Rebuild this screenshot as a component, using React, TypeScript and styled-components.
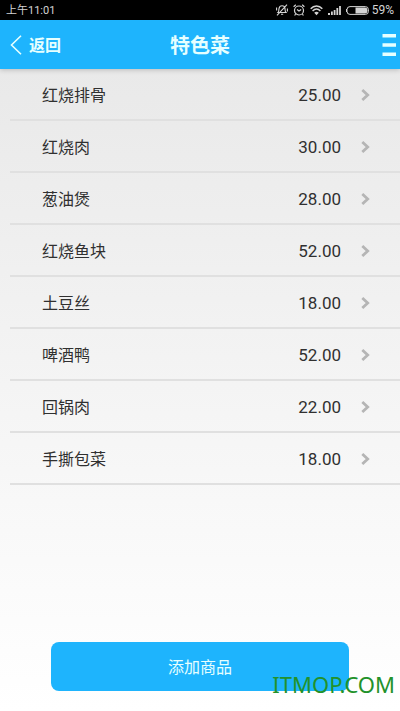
import React from "react";
import styled, { createGlobalStyle } from "styled-components";

const GlobalStyle = createGlobalStyle`
  *, *::before, *::after { box-sizing: border-box; }
  body {
    margin: 0;
    font-family: Roboto, "Noto Sans CJK SC", sans-serif;
    color: #333;
    background: #fff;
  }
  button { font: inherit; border: 0; margin: 0; cursor: pointer; }
`;

const Screen = styled.div`
  min-height: 100vh;
  display: flex;
  flex-direction: column;
  background: linear-gradient(#e9e9e9 69px, #f8f8f8 500px, #ffffff 100%);
`;

const StatusBar = styled.div`
  height: 20px;
  padding: 0 6px;
  display: flex;
  align-items: center;
  justify-content: space-between;
  background: #000;
  color: #d4d4d4;
  font-size: 12px;
  line-height: 20px;
`;

const Clock = styled.span`
  padding-top: 2px;
  font-size: 11px;
`;

const StatusIcons = styled.div`
  display: flex;
  align-items: center;
  gap: 5px;
`;

const Battery = styled.span`
  display: flex;
  align-items: center;
  gap: 3px;
`;

const Header = styled.header`
  height: 49px;
  display: grid;
  grid-template-columns: 1fr auto 1fr;
  align-items: center;
  background: #1eb4fd;
  color: #e6ffff;
  box-shadow: 0 1px 5px rgba(0, 0, 0, 0.2);
`;

const BackButton = styled.button`
  && { font-size: 16px; font-weight: 700; }
  justify-self: start;
  display: flex;
  align-items: center;
  gap: 7px;
  height: 48px;
  padding: 0 10px;
  background: none;
  color: inherit;
`;

const BackLabel = styled.span`
  padding-bottom: 2px;
`;

const Title = styled.h1`
  margin: 0;
  padding-top: 2px;
  font-size: 20px;
  line-height: 24px;
  font-weight: 700;
`;

const MenuButton = styled.button`
  justify-self: end;
  display: flex;
  padding: 8px 4px;
  background: none;
  color: inherit;
`;

const DishList = styled.ul`
  margin: 0;
  padding: 0 0 0 10px;
  list-style: none;
`;

const DishItem = styled.li`
  border-bottom: 2px solid #e0e0e0;
`;

const DishButton = styled.button`
  && { font-size: 16px; }
  width: 100%;
  height: 50px;
  padding: 2px 30px 0 32px;
  display: flex;
  align-items: center;
  background: none;
  color: #303030;
  text-align: left;
`;

const DishName = styled.span`
  flex: 1;
  padding-bottom: 2px;
`;

const Price = styled.span`
  margin-right: 20px;
  font-size: 17px;
`;

const Footer = styled.footer`
  margin-top: auto;
  padding: 0 51px 20px;
  position: relative;
`;

const AddButton = styled.button`
  && { font-size: 16px; }
  width: 100%;
  height: 49px;
  padding: 0 0 2px;
  border-radius: 8px;
  background: #1eb4fd;
  color: #e6ffff;
`;

const Watermark = styled.span`
  position: absolute;
  right: 5px;
  bottom: 15px;
  font-family: "Noto Sans", sans-serif;
  font-size: 22px;
  line-height: 24px;
  color: #22922a;
  pointer-events: none;
`;

const dishes = [
  { name: "红烧排骨", price: "25.00" },
  { name: "红烧肉", price: "30.00" },
  { name: "葱油煲", price: "28.00" },
  { name: "红烧鱼块", price: "52.00" },
  { name: "土豆丝", price: "18.00" },
  { name: "啤酒鸭", price: "52.00" },
  { name: "回锅肉", price: "22.00" },
  { name: "手撕包菜", price: "18.00" },
];

const MutedIcon = () => (
  <svg width="12" height="12" viewBox="0 0 12 12" fill="none" stroke="currentColor" strokeWidth="1.1" aria-hidden="true">
    <path d="M2 8.5C3 7.5 2.7 6 3 4.6C3.4 2.6 4.5 1.8 6 1.8s2.8 1 3 2.8c.2 1.7 0 2.9 1 3.9H2zM5 10.3h2.2M11 .7L1 11.3M.6 3.5v3M11.4 4.5v3" />
  </svg>
);

const AlarmIcon = () => (
  <svg width="12" height="12" viewBox="0 0 12 12" fill="none" stroke="currentColor" strokeWidth="1.2" aria-hidden="true">
    <circle cx="6" cy="6.5" r="4.5" />
    <path d="M.6 2.8L2.8.8M11.4 2.8L9.2.8M4 5.5l2 1.5l2.2-1.5M2.6 10.2l-1 1.3M9.4 10.2l1 1.3" />
  </svg>
);

const WifiIcon = () => (
  <svg width="13" height="11" viewBox="0 0 13 11" fill="none" stroke="currentColor" strokeWidth="1.5" aria-hidden="true">
    <path d="M.7 3.8C4-.1 9-.1 12.3 3.8M2.6 6C5 3.4 8 3.4 10.4 6" />
    <path d="M4.2 7.7C5.7 6.3 7.3 6.3 8.8 7.7L6.5 10.3z" fill="currentColor" stroke="none" />
  </svg>
);

const SignalIcon = () => (
  <svg width="13" height="10" viewBox="0 0 13 10" fill="currentColor" aria-hidden="true">
    <path d="M0 8h2v2H0zM3 6.5h1.8V10H3zM5.7 5h1.8v5H5.7zM8.4 3h1.8v7H8.4zM11.1 1h1.8v9h-1.8z" />
  </svg>
);

const BatteryIcon = () => (
  <svg width="23" height="9" viewBox="0 0 23 9" aria-hidden="true">
    <rect x="1" y=".6" width="21.4" height="7.8" rx="3" fill="none" stroke="currentColor" />
    <path d="M9.5 1.5H19q2.5 0 2.5 3T19 7.5H9.5zM0 3h1v3H0z" fill="currentColor" />
  </svg>
);

const BackIcon = () => (
  <svg width="12" height="20" viewBox="0 0 12 20" fill="none" stroke="currentColor" strokeWidth="1.6" aria-hidden="true">
    <path d="M11 .7L1.5 10L11 19.3" />
  </svg>
);

const MenuIcon = () => (
  <svg width="14" height="22" viewBox="0 0 14 22" fill="currentColor" aria-hidden="true">
    <path d="M.5 0H14v3.4H.5zM.5 9.3H14v3.4H.5zM.5 18.6H14V22H.5z" />
  </svg>
);

const ChevronIcon = () => (
  <svg width="9" height="12" viewBox="0 0 9 12" fill="none" stroke="#b5b5b5" strokeWidth="2.8" aria-hidden="true">
    <path d="M1.3 1L6.7 6L1.3 11" />
  </svg>
);

export default function App() {
  return (
    <Screen>
      <GlobalStyle />
      <StatusBar>
        <Clock>上午11:01</Clock>
        <StatusIcons>
          <MutedIcon />
          <AlarmIcon />
          <WifiIcon />
          <SignalIcon />
          <Battery>
            <BatteryIcon />
            <span>59%</span>
          </Battery>
        </StatusIcons>
      </StatusBar>
      <Header>
        <BackButton type="button">
          <BackIcon />
          <BackLabel>返回</BackLabel>
        </BackButton>
        <Title>特色菜</Title>
        <MenuButton type="button" aria-label="菜单">
          <MenuIcon />
        </MenuButton>
      </Header>
      <main>
        <DishList>
          {dishes.map((dish) => (
            <DishItem key={dish.name}>
              <DishButton type="button">
                <DishName>{dish.name}</DishName>
                <Price>{dish.price}</Price>
                <ChevronIcon />
              </DishButton>
            </DishItem>
          ))}
        </DishList>
      </main>
      <Footer>
        <AddButton type="button">添加商品</AddButton>
        <Watermark>ITMOP.COM</Watermark>
      </Footer>
    </Screen>
  );
}
